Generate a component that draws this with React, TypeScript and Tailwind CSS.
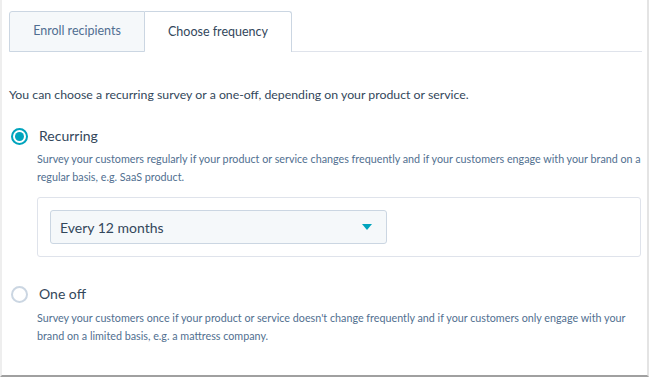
import React from 'react';

const font = { fontFamily: 'Lato, "Open Sans", sans-serif' };

function Radio({ checked }: { checked: boolean }) {
  return checked ? (
    <span className="flex h-[17px] w-[17px] items-center justify-center rounded-full border-[2px] border-[#00a4bd] bg-white">
      <span className="h-[9px] w-[9px] rounded-full bg-[#00a4bd]" />
    </span>
  ) : (
    <span className="h-[17px] w-[17px] rounded-full border-[2px] border-[#cbd6e2] bg-white" />
  );
}

export default function App() {
  return (
    <div className="h-[378px] w-[650px] bg-white" style={font}>
      <div className="h-[377px] w-[649px] border-b-[2px] border-b-[#a0a0a0] border-l-[2px] border-l-[#eeeeee] border-r-[2px] border-r-[#e4e4e4] pl-[7px] pr-[5px] pt-[11px] text-[#33475b]">
        <div className="flex">
          <div className="flex h-[41px] w-[136px] items-center justify-center rounded-tl-[3px] border border-[#cbd6e2] bg-[#f5f8fa] text-[12.5px] text-[#506e91]">
            Enroll recipients
          </div>
          <div className="flex h-[41px] w-[147px] items-center justify-center rounded-tr-[3px] border border-b-0 border-l-0 border-[#cbd6e2] bg-white text-[12.5px] text-[#33475b]">
            Choose frequency
          </div>
          <div className="flex-1 border-b border-[#dfe3eb]" />
        </div>

        <p className="mt-[34px] text-[12.3px] leading-[18px]">
          You can choose a recurring survey or a one-off, depending on your product or service.
        </p>

        <div className="mt-[22px] flex items-center gap-[11px] pl-[2px]">
          <Radio checked />
          <span className="text-[14px] leading-[20px]">Recurring</span>
        </div>
        <p className="ml-[28px] mt-[4px] text-[10.75px] leading-[18px] text-[#516f90]">
          Survey your customers regularly if your product or service changes frequently and if your customers engage with your brand on a regular basis, e.g. SaaS product.
        </p>
        <div className="ml-[28px] mr-[1px] mt-[11px] rounded-[3px] border border-[#dfe3eb] px-[12px] py-[12px]">
          <div className="flex h-[34px] w-[337px] items-center justify-between rounded-[3px] border border-[#cbd6e2] bg-[#f5f8fa] pl-[9px] pr-[14px]">
            <span className="text-[14px]">Every 12 months</span>
            <svg width="10" height="6" viewBox="0 0 10 6">
              <path d="M0 0 H10 L5 6 Z" fill="#00a4bd" />
            </svg>
          </div>
        </div>

        <div className="mt-[27px] flex items-center gap-[11px] pl-[2px]">
          <Radio checked={false} />
          <span className="text-[14px] leading-[20px]">One off</span>
        </div>
        <p className="ml-[28px] mt-[5px] text-[10.75px] leading-[18px] text-[#516f90]">
          Survey your customers once if your product or service doesn't change frequently and if your customers only engage with your brand on a limited basis, e.g. a mattress company.
        </p>
      </div>
    </div>
  );
}
